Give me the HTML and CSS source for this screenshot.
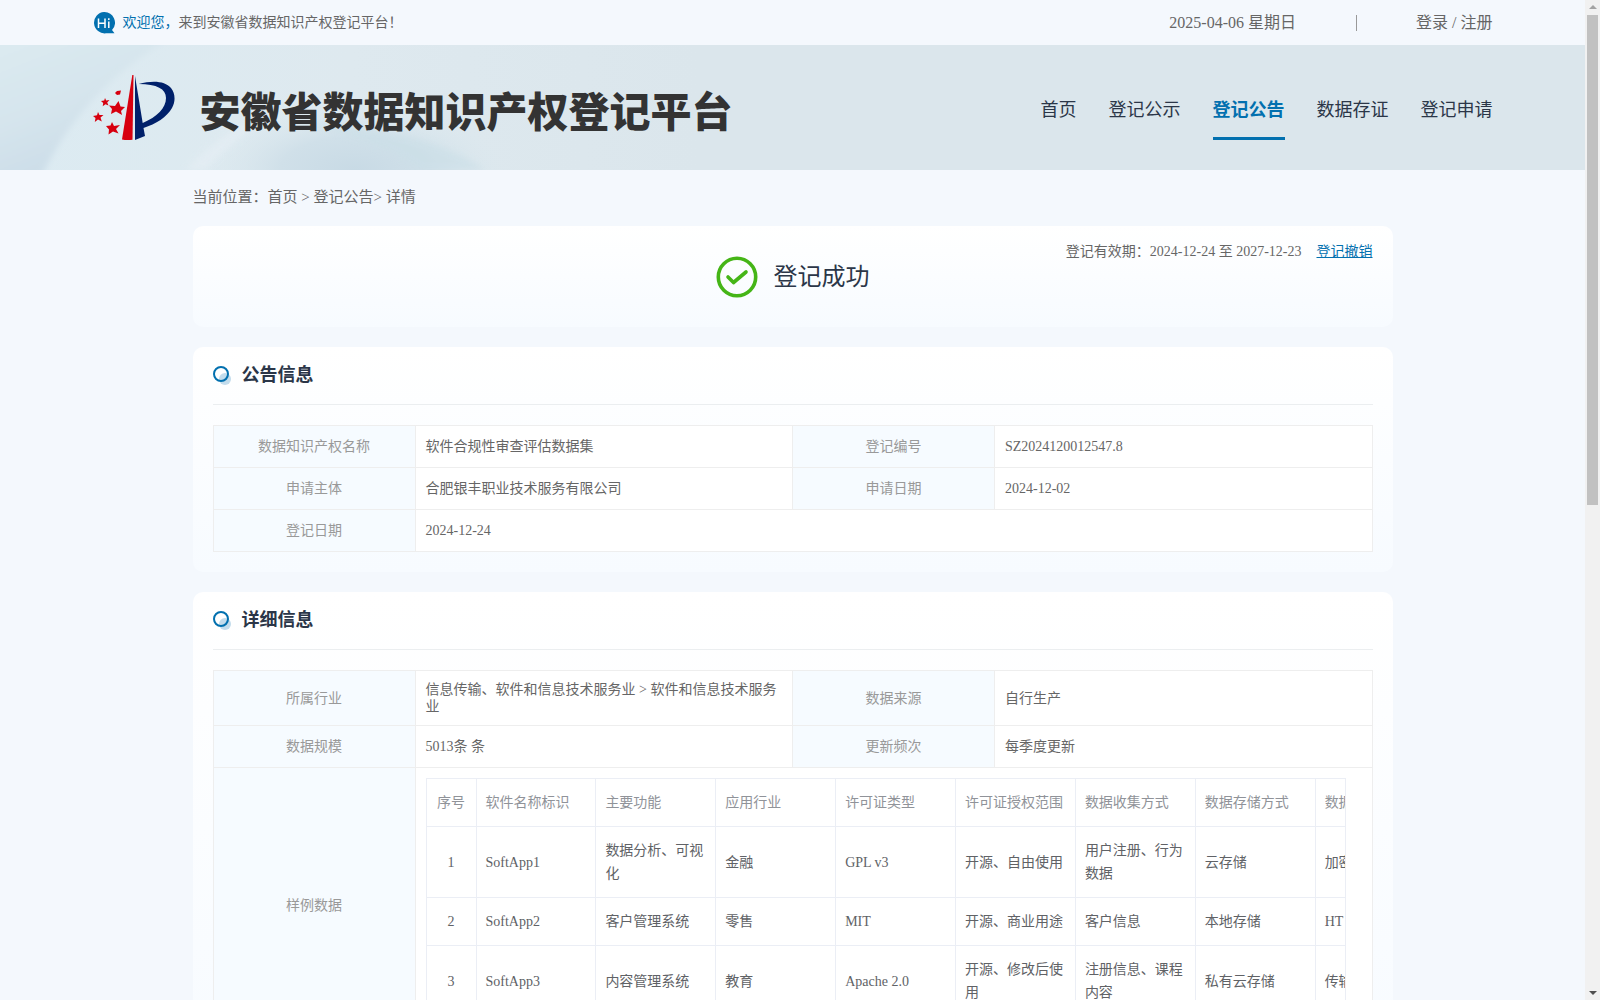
FILE: index.html
```html
<!DOCTYPE html>
<html lang="zh-CN">
<head>
<meta charset="utf-8">
<title>安徽省数据知识产权登记平台</title>
<link rel="stylesheet" href="styles.css">
</head>
<body>
<div class="topbar">
  <div class="wide topbar-inner">
    <svg class="hi" viewBox="0 0 22 22" aria-hidden="true"><path d="M11 0A10.700 10.700 0 1 0 13 21.300H21.500L19 18A10.700 10.700 0 0 0 11 0Z" fill="#0270af"/><path d="M5.500 6.500v9.500M12 6.500v9.500M5.500 11.200h6.500M15.800 9.500v6.500M15.800 6.300v1.700" stroke="#fff" stroke-width="1.500" fill="none"/></svg>
    <p class="welcome"><span class="accent">欢迎您，</span>来到安徽省数据知识产权登记平台！</p>
    <div class="account">
      <span>2025-04-06 星期日</span><span class="bar"></span>
      <span><a href="#">登录</a> / <a href="#">注册</a></span>
    </div>
  </div>
</div>
<header class="header">
  <svg class="header-art" viewBox="0 0 700 125" aria-hidden="true">
    <defs>
      <linearGradient id="a" x1="0" y1="0" x2="0.500" y2="1"><stop offset="0" stop-color="#dcebf1"/><stop offset="0.500" stop-color="#d6e5ed"/><stop offset="1" stop-color="#c9dbe7"/></linearGradient>
      <linearGradient id="b" x1="0" y1="0" x2="1" y2="0"><stop offset="0" stop-color="#dcebf2"/><stop offset="0.500" stop-color="#dee9ef"/><stop offset="1" stop-color="#dbe6ec"/></linearGradient>
      <radialGradient id="c"><stop offset="0" stop-color="#c8dae5"/><stop offset="0.500" stop-color="#d0e0e9"/><stop offset="1" stop-color="#dbe8ee" stop-opacity="0"/></radialGradient>
      <filter id="f"><feGaussianBlur stdDeviation="3"/></filter>
    </defs>
    <rect width="700" height="125" fill="url(#b)"/>
    <path d="M-10 -10H175Q80 45 40 135H-10Z" fill="url(#a)" filter="url(#f)"/>
    <ellipse cx="355" cy="125" rx="150" ry="66" fill="url(#c)"/>
    <path d="M185 125Q230 80 280 62Q240 90 205 125Z" fill="#e5eef4" opacity=".7" filter="url(#f)"/>
    <path d="M300 78Q430 84 485 125H420Q380 95 300 78Z" fill="#cbdfe7" opacity=".6" filter="url(#f)"/>
  </svg>
  <div class="wide header-inner">
    <a class="brand" href="#">
      <svg class="logo" viewBox="0 0 82 66" aria-hidden="true">
        <path d="M39.300 0L29 64.500Q34 65.500 39.500 64.700L40.500 0Z" fill="#d7000f"/>
        <path d="M42 1L49.700 48C64 42 73 33 73 23C73 14 64 9 45.700 9C60 5 72 6 78 13C82 18 83 26 79 33C74 42 63 49 50.500 53L52 61L42 65Z" fill="#00206a"/>
        <g fill="#d7000f"><path d="M25.500 26L27.500 31.500L32 32L28 36L29 40L23 36.500L18 39L19 34L16 30.500L22 31Z"/><path d="M12 23l1.200 2.500 3.300-.500-2.300 2.500 1.300 3-3-1.300-2.800 2 .500-3.300-2.200-2 3.200-.500ZM24 16l4-.500-1 4-3 .500-2-2ZM5 37l1.500 3 4 0-3 2.500 1.300 4-3.800-2-3.200 2.500 .700-4L0 41l4-.800ZM19 47l2 4 6-1-4 4 2.500 4.500-5.500-2-4.500 3 .500-5L13 51l4.500-.500Z"/></g>
      </svg>
      <h1 class="brand-name">安徽省数据知识产权登记平台</h1>
    </a>
    <nav class="nav">
      <a href="#">首页</a><a href="#">登记公示</a><a href="#" class="active" aria-current="page">登记公告</a><a href="#">数据存证</a><a href="#">登记申请</a>
    </nav>
  </div>
</header>
<main class="main">
  <div class="crumbs">当前位置：<a href="#">首页</a> &gt; <a href="#">登记公告</a>&gt; 详情</div>
  <section class="card status">
    <div class="result">
      <svg class="check" viewBox="0 0 42 42" aria-hidden="true"><circle cx="21" cy="21" r="18.700" fill="none" stroke="#45b517" stroke-width="3.600"/><path d="M12 21l5.500 5.500L30 16" fill="none" stroke="#45b517" stroke-width="3.600" stroke-linecap="round" stroke-linejoin="round"/></svg>
      <span>登记成功</span>
    </div>
    <div class="validity"><span>登记有效期：2024-12-24 至 2027-12-23</span><a href="#">登记撤销</a></div>
  </section>
  <section class="card">
    <h2 class="card-title"><svg viewBox="0 0 18 20" aria-hidden="true"><circle cx="12" cy="13" r="6" fill="#c3dcec"/><circle cx="8" cy="8" r="7" fill="none" stroke="#0270af" stroke-width="2"/></svg>公告信息</h2>
    <table class="info">
      <colgroup><col class="c-label"><col><col class="c-label"><col></colgroup>
      <tr><th scope="row">数据知识产权名称</th><td>软件合规性审查评估数据集</td><th scope="row">登记编号</th><td>SZ2024120012547.8</td></tr>
      <tr><th scope="row">申请主体</th><td>合肥银丰职业技术服务有限公司</td><th scope="row">申请日期</th><td>2024-12-02</td></tr>
      <tr><th scope="row">登记日期</th><td colspan="3">2024-12-24</td></tr>
    </table>
  </section>
  <section class="card">
    <h2 class="card-title"><svg viewBox="0 0 18 20" aria-hidden="true"><circle cx="12" cy="13" r="6" fill="#c3dcec"/><circle cx="8" cy="8" r="7" fill="none" stroke="#0270af" stroke-width="2"/></svg>详细信息</h2>
    <table class="info">
      <colgroup><col class="c-label"><col><col class="c-label"><col></colgroup>
      <tr><th scope="row">所属行业</th><td>信息传输、软件和信息技术服务业 &gt; 软件和信息技术服务业</td><th scope="row">数据来源</th><td>自行生产</td></tr>
      <tr><th scope="row">数据规模</th><td>5013条 条</td><th scope="row">更新频次</th><td>每季度更新</td></tr>
      <tr><th scope="row">样例数据</th><td colspan="3">
        <div class="sample-wrap">
          <table class="sample">
            <thead><tr><th class="c-no">序号</th><th>软件名称标识</th><th>主要功能</th><th>应用行业</th><th>许可证类型</th><th>许可证授权范围</th><th>数据收集方式</th><th>数据存储方式</th><th>数据</th></tr></thead>
            <tbody>
              <tr><td class="c-no">1</td><td>SoftApp1</td><td>数据分析、可视化</td><td>金融</td><td>GPL v3</td><td>开源、自由使用</td><td>用户注册、行为数据</td><td>云存储</td><td>加密</td></tr>
              <tr><td class="c-no">2</td><td>SoftApp2</td><td>客户管理系统</td><td>零售</td><td>MIT</td><td>开源、商业用途</td><td>客户信息</td><td>本地存储</td><td>HT</td></tr>
              <tr><td class="c-no">3</td><td>SoftApp3</td><td>内容管理系统</td><td>教育</td><td>Apache 2.0</td><td>开源、修改后使用</td><td>注册信息、课程内容</td><td>私有云存储</td><td>传输</td></tr>
            </tbody>
          </table>
        </div>
      </td></tr>
    </table>
  </section>
</main>
<div class="scrollbar" aria-hidden="true"><i class="up"></i><i class="thumb"></i><i class="down"></i></div>
</body>
</html>
```
FILE: styles.css
```css
* { box-sizing: border-box; }
html { scrollbar-width: none; }
body {
  margin: 0;
  padding-right: 15px;
  background: #f4f8fd;
  color: #666;
  font: 14px/17px "Liberation Serif", "Noto Sans CJK SC", serif;
}
a { color: inherit; text-decoration: none; }
h1, h2, p { margin: 0; }

.wide { max-width: 1400px; margin: 0 auto; }

.topbar-inner { display: flex; align-items: center; height: 45px; }
.hi { width: 22px; height: 22px; margin-right: 8px; }
.accent { color: #0270af; }
.account { display: flex; align-items: center; margin-left: auto; font-size: 16px; }
.bar { width: 1px; height: 16px; margin: 0 59px 0 60px; background: #999; }

.header { position: relative; height: 125px; background: #dbe6ec; overflow: hidden; }
.header-art { position: absolute; left: 0; top: 0; width: 700px; height: 125px; }
.header-inner { position: relative; display: flex; align-items: center; justify-content: space-between; height: 125px; }
.brand { display: flex; align-items: center; gap: 25px; }
.logo { width: 82px; height: 66px; }
.brand-name { padding-top: 10px; color: #333; font-size: 41px; line-height: 48px; font-weight: 900; }
.nav { display: flex; gap: 32px; padding-top: 4px; color: #2b3648; font-size: 18px; line-height: 28px; }
.nav a { padding: 16px 0 13px; border-bottom: 3px solid transparent; }
.nav .active { color: #0270af; font-weight: bold; border-color: #0270af; }

.main { max-width: 1200px; margin: 0 auto; padding-bottom: 20px; }
.crumbs { padding: 15px 0 17px; font-size: 15px; line-height: 24px; }

.card {
  margin-bottom: 20px;
  padding: 0 20px 20px;
  border-radius: 10px;
  background: linear-gradient(#fff, #f7fbff);
}
.status {
  display: grid;
  grid-template-columns: 1fr auto 1fr;
  align-items: center;
  min-height: 101px;
  padding: 16px 20px;
}
.result { grid-column: 2; display: flex; align-items: center; gap: 16px; color: #2b3648; font-size: 24px; line-height: 32px; }
.check { width: 42px; height: 42px; }
.validity { display: flex; justify-content: flex-end; align-self: start; gap: 15px; line-height: 20px; }
.validity a { color: #0270af; text-decoration: underline; }

.card-title {
  display: flex;
  align-items: center;
  gap: 11px;
  height: 58px;
  margin-bottom: 20px;
  border-bottom: 1px solid #ebeef0;
  color: #2b3648;
  font-size: 18px;
}
.card-title svg { width: 18px; height: 20px; }

table { border-collapse: collapse; table-layout: fixed; width: 100%; }
.info { background: #fff; }
.info th, .info td { height: 42px; padding: 10px; border: 1px solid #eee; text-align: left; }
.info .c-label { width: 202px; }
.info th { background: #f6fbff; color: #999; font-weight: normal; text-align: center; }
.sample-wrap { width: 920px; max-width: 100%; padding-bottom: 15px; overflow: hidden; border-right: 1px solid #ebeef5; }
.info .sample { width: 1010px; line-height: 23px; }
.info .sample th, .info .sample td { height: 48px; padding: 12px 9px; border-color: #ebeef5; }
.info .sample th { background: #fff; color: #909399; text-align: left; }
.info .sample td { color: #606266; }
.info .sample .c-no { width: 50px; text-align: center; }

.scrollbar { position: fixed; top: 0; right: 0; bottom: 0; width: 15px; display: flex; flex-direction: column; align-items: center; padding: 5px 0; background: #f1f1f1; }
.up, .down { border: 4px solid transparent; }
.up { border-top: 0; border-bottom-color: #a3a3a3; }
.down { margin-top: auto; border-bottom: 0; border-top-color: #505050; }
.thumb { width: 11px; height: 49.5%; margin-top: 6px; background: #c1c1c1; }
```
